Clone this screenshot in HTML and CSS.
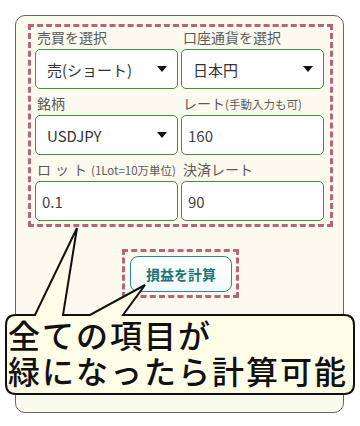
FILE: index.html
```html
<!DOCTYPE html>
<html lang="ja">
<head>
    <meta charset="UTF-8">
    <meta name="viewport" content="width=device-width, initial-scale=1.0">
    <title>損益計算</title>
    <link rel="stylesheet" href="styles.css">
</head>
<body>
    <div class="card">
        <div class="form-box">
            <div class="field">
                <label class="label">売買を選択</label>
                <div class="select-wrap">
                    <select class="control">
                        <option>売(ショート)</option>
                        <option>買(ロング)</option>
                    </select>
                </div>
            </div>
            <div class="field">
                <label class="label">口座通貨を選択</label>
                <div class="select-wrap">
                    <select class="control">
                        <option>日本円</option>
                        <option>米ドル</option>
                    </select>
                </div>
            </div>
            <div class="field">
                <label class="label">銘柄</label>
                <div class="select-wrap">
                    <select class="control">
                        <option>USDJPY</option>
                        <option>EURJPY</option>
                    </select>
                </div>
            </div>
            <div class="field">
                <label class="label">レート<span class="note">(手動入力も可)</span></label>
                <input class="control input" type="text" value="160">
            </div>
            <div class="field">
                <label class="label"><span class="wide">ロット</span><span class="note">(1Lot=10万単位)</span></label>
                <input class="control input" type="text" value="0.1">
            </div>
            <div class="field">
                <label class="label">決済レート</label>
                <input class="control input" type="text" value="90">
            </div>
        </div>

        <div class="button-row">
            <div class="button-box">
                <button class="calc-btn">損益を計算</button>
            </div>
        </div>
    </div>

    <div class="callout">
        <svg class="callout-shape" width="360" height="426" viewBox="0 0 360 426">
            <path d="M16 315 L35 315 L77 228 L63 315 L90 315 L145 285 L123 315 L344 315 Q354 315 354 325 L354 384 Q354 394 344 394 L16 394 Q6 394 6 384 L6 325 Q6 315 16 315 Z"
                  fill="#fefde7" stroke="#111" stroke-width="2" stroke-linejoin="miter"/>
        </svg>
        <div class="callout-text">
            <div class="callout-line">全ての項目が</div>
            <div class="callout-line">緑になったら計算可能</div>
        </div>
    </div>
</body>
</html>
```

FILE: styles.css
```css
* {
    margin: 0;
    padding: 0;
    box-sizing: border-box;
}

body {
    background: #fff;
    font-family: "Noto Sans CJK JP", "Noto Sans", sans-serif;
    width: 360px;
    height: 426px;
    position: relative;
    overflow: hidden;
}

.card {
    margin: 15px 0 0 15px;
    width: 329px;
    height: 398px;
    background: #fcfaef;
    border: 1px solid #666;
    border-radius: 10px;
    padding: 8px 10px 0 12px;
}

.form-box {
    border: 3px dashed #b8637c;
    padding: 0 6px 3px 4px;
    display: grid;
    grid-template-columns: 1fr 1fr;
    column-gap: 3px;
    row-gap: 4px;
}

.label {
    display: block;
    height: 20px;
    line-height: 20px;
    margin-bottom: 2px;
    padding-left: 2px;
    font-size: 14px;
    color: #5a5a5a;
    white-space: nowrap;
}

.note {
    font-size: 11.5px;
}

.wide {
    letter-spacing: 4px;
}

.select-wrap {
    position: relative;
}

.select-wrap::after {
    content: "";
    position: absolute;
    right: 11px;
    top: 17px;
    border-left: 5px solid transparent;
    border-right: 5px solid transparent;
    border-top: 6px solid #111;
    pointer-events: none;
}

.control {
    display: block;
    width: 100%;
    height: 40px;
    border: 1px solid #3f8f3f;
    border-radius: 5px;
    background: #fff;
    font-family: inherit;
    font-size: 15px;
    color: #333;
    outline: none;
}

select.control {
    appearance: none;
    -webkit-appearance: none;
    padding-left: 11px;
}

.input {
    padding-left: 6px;
    color: #444;
}

.button-row {
    display: flex;
    justify-content: center;
    margin-top: 22px;
}

.button-box {
    border: 3px dashed #b8637c;
    padding: 4px 4px 3px 5px;
}

.calc-btn {
    display: block;
    width: 102px;
    height: 36px;
    border: 1px solid #2b8c8c;
    border-radius: 8px;
    background: linear-gradient(#ffffff, #f2fafa);
    color: #1d7676;
    font-family: inherit;
    font-size: 14px;
    font-weight: bold;
}

.callout {
    position: absolute;
    left: 0;
    top: 0;
    width: 360px;
    height: 426px;
    pointer-events: none;
}

.callout-shape {
    display: block;
}

.callout-text {
    position: absolute;
    left: 8px;
    top: 316px;
    font-size: 32px;
    line-height: 36px;
    letter-spacing: 2px;
    font-weight: 500;
    color: #111;
    white-space: nowrap;
}

.callout-line {
    height: 36px;
}
```
